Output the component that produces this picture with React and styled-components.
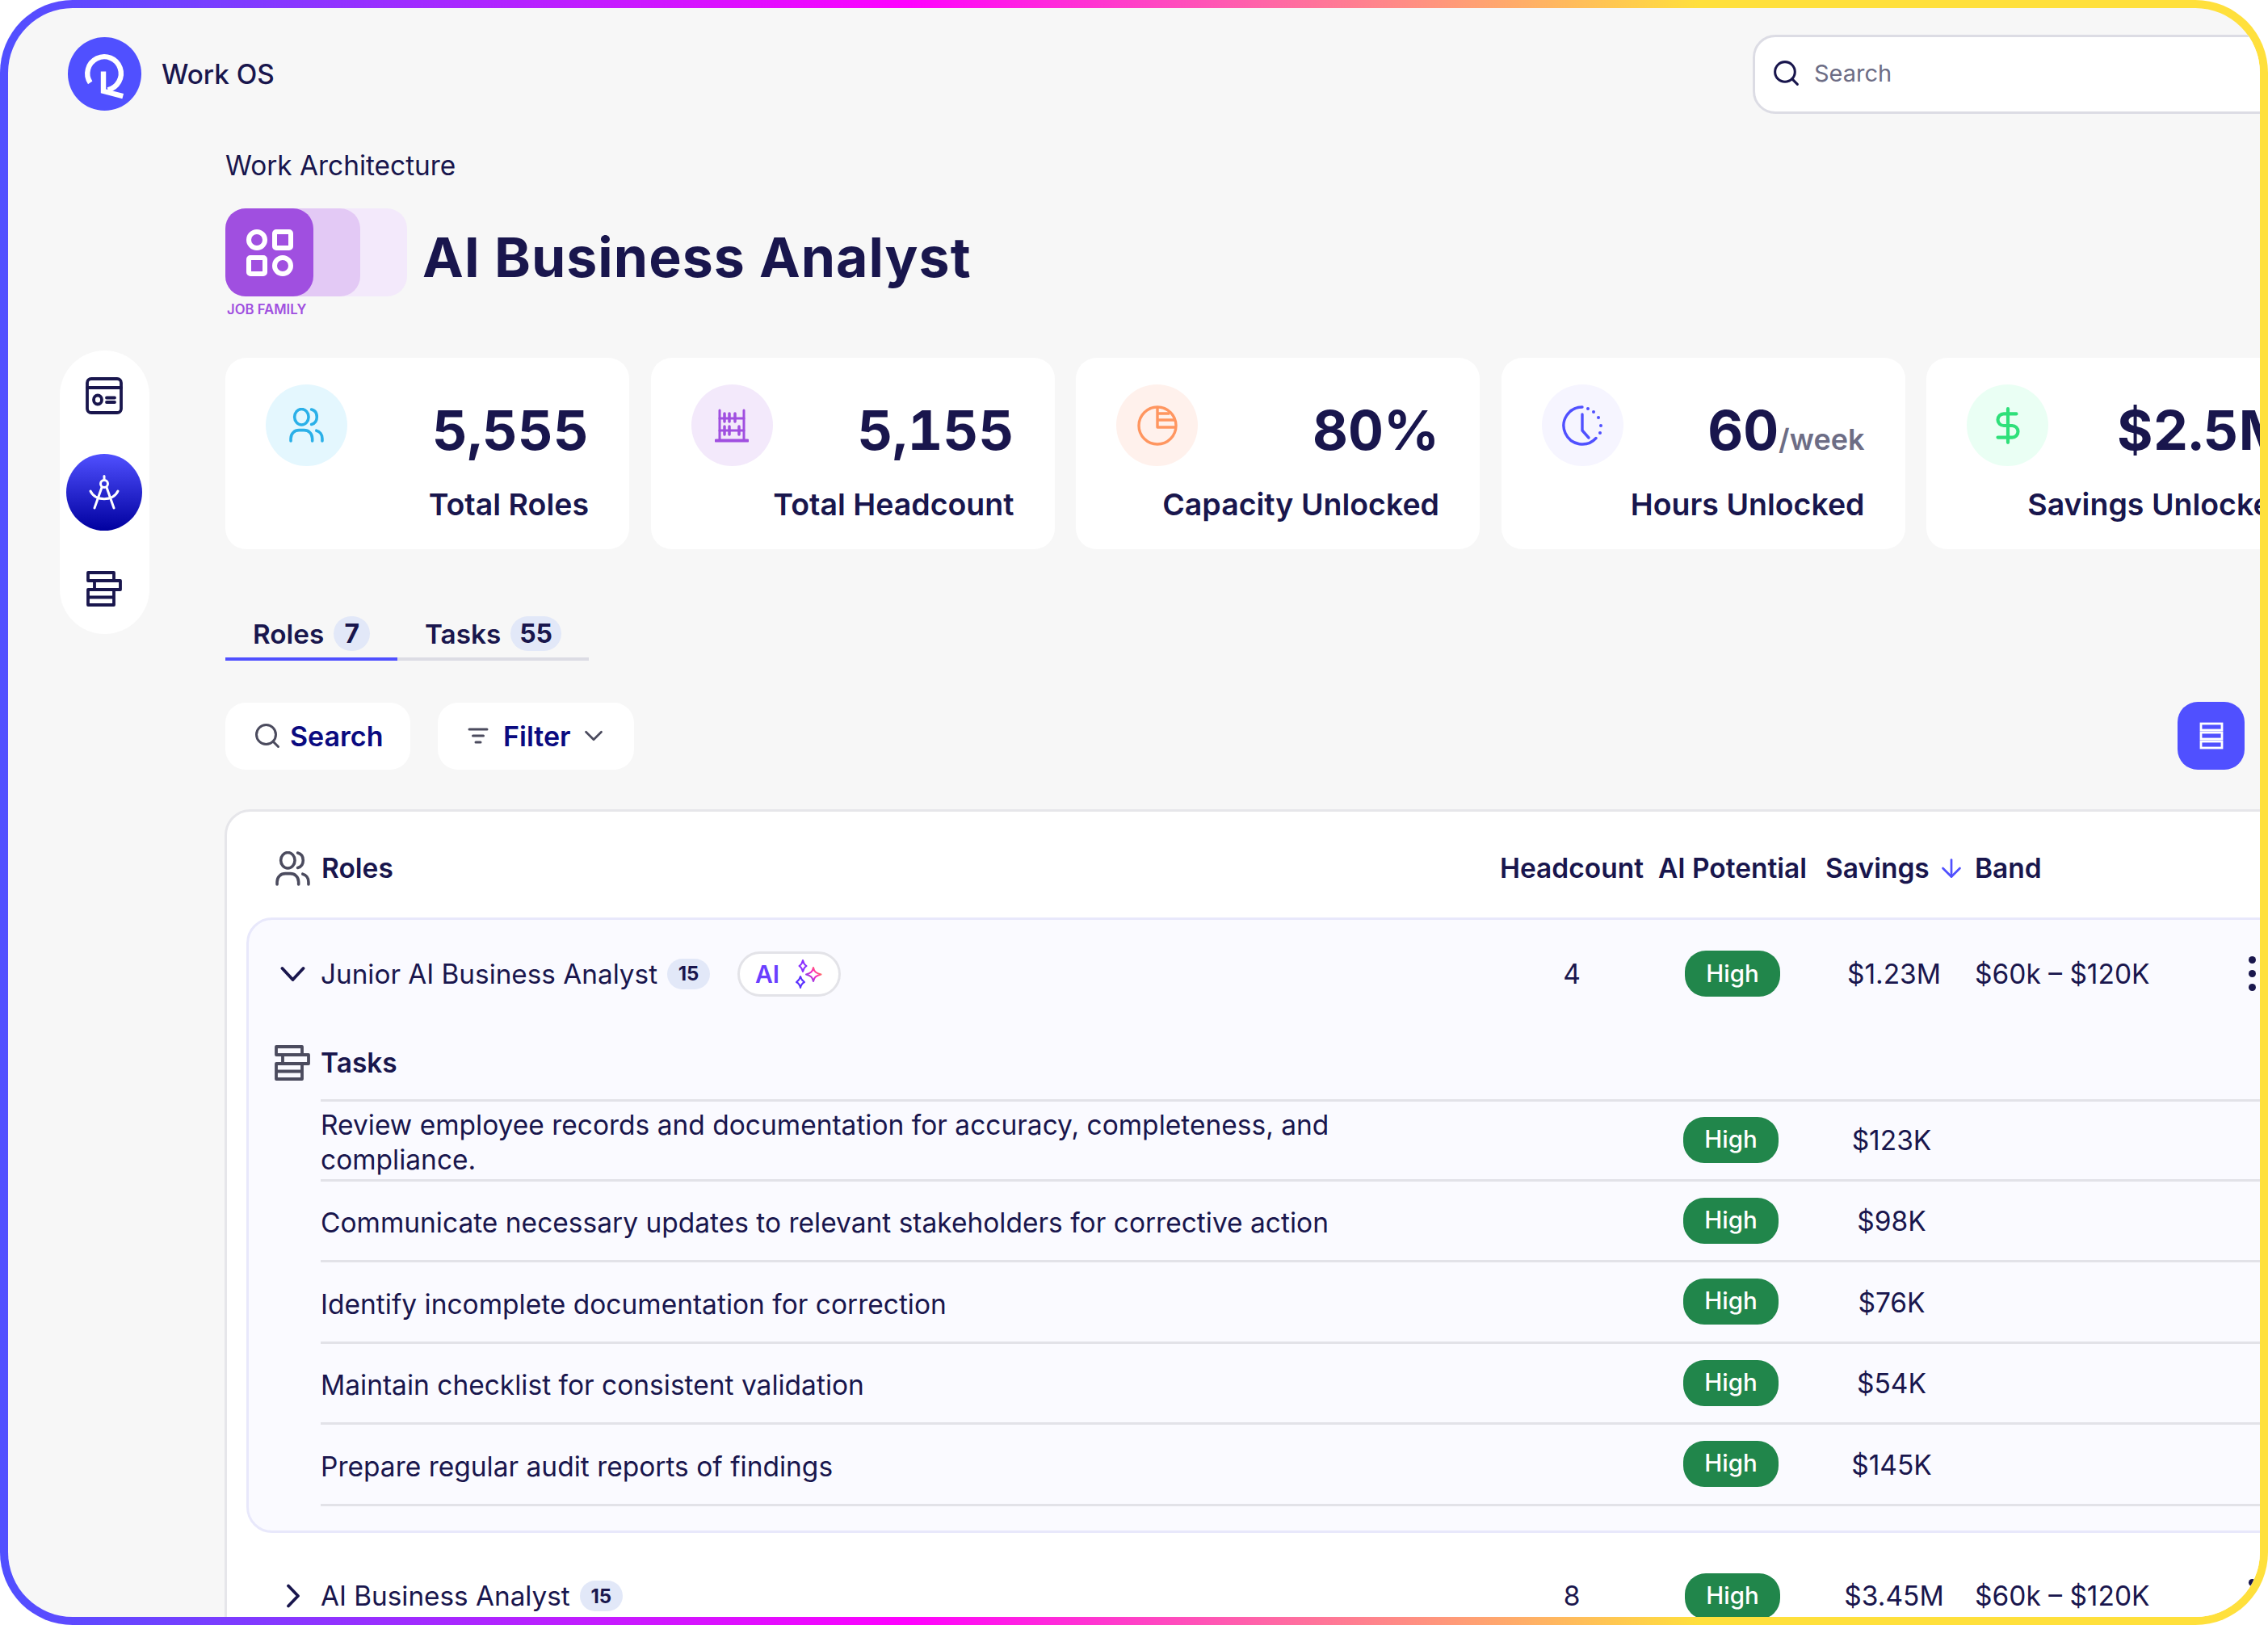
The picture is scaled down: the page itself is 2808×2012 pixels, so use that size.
import React from "react";
import styled, { createGlobalStyle } from "styled-components";
import { Search, ChevronDown, ArrowDown, DollarSign } from "lucide-react";

const INK = "#19164d";

const Global = createGlobalStyle`
  html, body { margin: 0; padding: 0; background: #fff; }
  body { font-family: Inter, "Noto Sans", sans-serif; color: ${INK}; }
  * { box-sizing: border-box; }
`;

const Frame = styled.div`
  width: 2808px;
  height: 2012px;
  border: 10px solid transparent;
  border-radius: 90px;
  background:
    linear-gradient(#f7f7f7, #f7f7f7) padding-box,
    linear-gradient(90deg, #5050ff 0%, #ff00ff 40%, #ffe03c 75%, #ffe03c 100%) border-box;
  overflow: hidden;
`;

const Topbar = styled.header`
  display: flex;
  align-items: flex-start;
  padding: 33px 0 0 74px;
  height: 131px;
`;
const Brand = styled.div`
  flex: 0 0 2086px;
  display: flex;
  align-items: center;
  gap: 25px;
  padding-top: 3px;
  font-size: 33.3px;
  font-weight: 500;
`;
const Logo = styled.svg`
  width: 91px;
  height: 91px;
  display: block;
`;
const TopSearch = styled.div`
  flex: 0 0 800px;
  height: 98px;
  display: flex;
  align-items: center;
  gap: 16px;
  padding: 0 0 4px 20px;
  background: #fff;
  border: 3px solid #dcdce4;
  border-radius: 28px;
  font-size: 29px;
  color: #6d6d85;
`;

const Body = styled.div`
  display: flex;
  align-items: flex-start;
`;
const SideCol = styled.div`
  flex: 0 0 269px;
  padding: 293px 0 0 63.5px;
`;
const Sidebar = styled.nav`
  width: 111px;
  height: 351px;
  border-radius: 56px;
  background: #fff;
  display: flex;
  flex-direction: column;
  align-items: center;
  padding-top: 33px;
`;
const SideIcon = styled.div`
  display: flex;
  align-items: center;
  justify-content: center;
  color: ${INK};
  width: 94px;
  height: ${(p) => p.$h}px;
  margin-bottom: ${(p) => p.$mb || 0}px;
`;
const SideActive = styled.div`
  width: 94px;
  height: 95px;
  border-radius: 50%;
  background: linear-gradient(180deg, #5050ff 0%, #00009f 100%);
  display: flex;
  align-items: center;
  justify-content: center;
  color: #fff;
  margin-bottom: 50px;
`;

const Content = styled.main`
  flex: 0 0 2600px;
`;
const Crumb = styled.div`
  margin-top: 44px;
  font-size: 33.4px;
  line-height: 40px;
`;
const TitleRow = styled.div`
  margin-top: 33px;
  display: flex;
  align-items: center;
  gap: 19px;
`;
const Layer = styled.div`
  width: ${(p) => p.$w}px;
  height: 109px;
  border-radius: 25px;
  background: ${(p) => p.$bg};
  display: flex;
  align-items: center;
  justify-content: ${(p) => (p.$front ? "center" : "flex-start")};
  color: #fff;
`;
const Title = styled.h1`
  margin: 10px 0 0;
  font-size: 68px;
  letter-spacing: 1px;
  line-height: 84px;
  font-weight: 700;
`;
const Family = styled.div`
  margin: 6px 0 0 2px;
  font-size: 16.7px;
  line-height: 20px;
  font-weight: 600;
  color: #a04fe0;
`;

const Cards = styled.section`
  margin-top: 50px;
  display: flex;
  gap: 26.5px;
`;
const Card = styled.article`
  flex: 0 0 500px;
  height: 237px;
  background: #fff;
  border-radius: 26px;
  padding: 33px 50px 0 50px;
  display: flex;
  flex-direction: column;
  white-space: nowrap;
`;
const CardTop = styled.div`
  display: flex;
  justify-content: space-between;
  align-items: flex-start;
`;
const IconDisc = styled.div`
  flex: 0 0 101px;
  height: 101px;
  border-radius: 50%;
  background: ${(p) => p.$bg};
  color: ${(p) => p.$fg};
  display: flex;
  align-items: center;
  justify-content: center;
`;
const Num = styled.div`
  font-size: 68px;
  line-height: 80px;
  font-weight: 700;
  margin-top: 16px;
  font-variant-numeric: tabular-nums;
`;
const Unit = styled.span`
  font-size: 36px;
  line-height: 1;
  font-weight: 600;
  color: #6d6d85;
`;
const CardLabel = styled.div`
  margin-top: 26px;
  text-align: right;
  font-size: 37.5px;
  line-height: 44px;
  font-weight: 600;
`;

const Tabs = styled.div`
  margin-top: 83px;
  width: 450px;
  display: flex;
  border-bottom: 4px solid #dcdce4;
`;
const Tab = styled.div`
  display: flex;
  align-items: center;
  gap: 12px;
  padding: 0 34px 8px;
  margin-bottom: -4px;
  width: ${(p) => p.$w}px;
  font-size: 33.3px;
  font-weight: 600;
  border-bottom: 4px solid ${(p) => (p.$active ? "#5050ff" : "transparent")};
`;
const TabBadge = styled.span`
  height: 43px;
  padding: 0 13px;
  min-width: 45px;
  border-radius: 22px;
  background: #e2e8f8;
  display: flex;
  align-items: center;
  justify-content: center;
  font-size: 32px;
  font-weight: 700;
`;

const Toolbar = styled.div`
  margin-top: 51px;
  width: 2500px;
  display: flex;
  align-items: center;
  gap: 34px;
`;
const ToolBtn = styled.div`
  height: 83px;
  width: ${(p) => p.$w}px;
  background: #fff;
  border-radius: 25px;
  display: flex;
  align-items: center;
  padding-left: ${(p) => p.$pl}px;
  font-size: 34px;
  font-weight: 600;
  color: #0a0a80;
`;
const ToolIcon = styled.span`
  display: flex;
  color: #4b4b5e;
  margin-right: ${(p) => p.$mr}px;
  margin-left: ${(p) => p.$ml || 0}px;
`;
const ViewBtn = styled.div`
  margin-left: auto;
  width: 83px;
  height: 84px;
  border-radius: 25px;
  background: #5050ff;
  display: flex;
  align-items: center;
  justify-content: center;
`;

const Table = styled.section`
  margin: 49px 0 0 -1px;
  width: 2700px;
  background: #fff;
  border: 3px solid #e6e6ea;
  border-radius: 32px;
  padding-bottom: 100px;
`;
const HeadRow = styled.div`
  display: grid;
  grid-template-columns: 1569px 192px 206px 197px 1fr;
  align-items: center;
  height: 131px;
  padding-top: 9px;
  font-size: 33.5px;
  font-weight: 600;
`;
const HeadFirst = styled.div`
  display: flex;
  align-items: center;
  gap: 14px;
  padding-left: 60px;
`;
const HeadCell = styled.div`
  text-align: center;
  white-space: nowrap;
`;
const SortCell = styled.div`
  display: flex;
  align-items: center;
  gap: 9px;
  padding-left: 12px;
  color: ${INK};
  white-space: nowrap;
`;
const Arrow = styled.span`
  display: flex;
  color: #5050ff;
`;
const HeadLeft = styled.div`
  white-space: nowrap;
`;

const Panel = styled.div`
  margin-left: 24px;
  background: #fafaff;
  border: 3px solid #e8e8fb;
  border-radius: 32px;
  padding: 38px 0 30px;
`;
const RoleRow = styled.div`
  display: grid;
  grid-template-columns: 1542px 192px 206px 197px 325px 36px;
  align-items: center;
  font-size: 33.5px;
  margin-left: ${(p) => p.$ml || 0}px;
  margin-top: ${(p) => p.$mt || 0}px;
`;
const NameCell = styled.div`
  display: flex;
  align-items: center;
  padding-left: 39px;
  font-size: 33.3px;
  white-space: nowrap;
`;
const Chevron = styled.span`
  flex: 0 0 31px;
  margin-right: 19px;
  display: flex;
  justify-content: center;
  color: ${INK};
`;
const CountBadge = styled.span`
  margin-left: 12px;
  width: 53px;
  height: 38px;
  border-radius: 19px;
  background: #e2e8f8;
  font-size: 24px;
  font-weight: 700;
  display: flex;
  align-items: center;
  justify-content: center;
`;
const AiPill = styled.span`
  margin-left: 34px;
  width: 128px;
  height: 56px;
  border-radius: 28px;
  border: 3px solid #e3e3e8;
  background: #fff;
  display: flex;
  align-items: center;
  justify-content: center;
  gap: 18px;
  font-size: 30px;
  font-weight: 600;
  color: #6a3fff;
`;
const Center = styled.div`
  text-align: center;
  white-space: nowrap;
  padding-right: ${(p) => p.$pr || 0}px;
`;
const PillCell = styled.div`
  display: flex;
  justify-content: center;
  padding-bottom: ${(p) => p.$pb || 0}px;
`;
const High = styled.span`
  width: 118px;
  height: 57px;
  padding-bottom: 2px;
  border-radius: 26px;
  background: #21864b;
  color: #fff;
  font-size: 29.5px;
  font-weight: 500;
  display: flex;
  align-items: center;
  justify-content: center;
`;
const Band = styled.div`
  white-space: nowrap;
`;
const Kebab = styled.div`
  display: flex;
  flex-direction: column;
  align-items: center;
  gap: 8px;
`;
const Dot = styled.span`
  width: 9px;
  height: 9px;
  border-radius: 50%;
  background: ${INK};
`;

const TasksHead = styled.div`
  margin-top: 60px;
  padding-left: 32px;
  display: flex;
  align-items: center;
  gap: 13px;
  font-size: 33.5px;
  font-weight: 600;
  color: ${INK};
`;
const TaskList = styled.div`
  margin: 23px 0 0 89px;
  border-top: 3px solid #e2e2e8;
`;
const TaskRow = styled.div`
  display: grid;
  grid-template-columns: 1451px 192px 206px 192px 1fr;
  align-items: center;
  height: 100.5px;
  padding-top: 3px;
  border-bottom: 3px solid #e2e2e8;
  font-size: 33.5px;
  line-height: 43px;

  &:first-child {
    height: 98.5px;
    padding-top: 2px;
  }
`;
const TaskText = styled.div`
  width: 1300px;
  padding-top: 4px;
`;
const Spacer = styled.div``;

const Ic = styled.svg`
  display: block;
  flex: none;
`;

const UsersIcon = ({ size = 43, color = "currentColor", sw = 3.5 }) => (
  <Ic width={size} height={size} viewBox="0 0 42 42" fill="none" stroke={color} strokeWidth={sw} strokeLinecap="round">
    <ellipse cx="15" cy="11" rx="8.5" ry="9.5" />
    <path d="M27 2c4 1 6.500 4.500 6.500 9s-2.500 8-6.500 9" />
    <path d="M2 40v-3c0-6 4.500-10 10-10h6c5.500 0 10 4 10 10v3" />
    <path d="M33 27.500c4 1 7 4.500 7 9.500v3" />
  </Ic>
);
const StackIcon = ({ size = 44, color = "currentColor", sw = 3.8 }) => (
  <Ic width={size} height={size} viewBox="0 0 44 44" fill="none" stroke={color} strokeWidth={sw} strokeLinejoin="round">
    <rect x="2" y="2" width="32" height="10" />
    <rect x="10" y="12" width="32" height="11" />
    <path d="M2 23h32v19H2zM2 32.500h32" />
  </Ic>
);
const IdIcon = () => (
  <Ic width="46" height="46" viewBox="0 0 46 46" fill="none" stroke="currentColor" strokeWidth="3.8" strokeLinecap="round">
    <rect x="2" y="2" width="42" height="42" rx="5" />
    <path d="M2 13h42" />
    <ellipse cx="15" cy="28" rx="5" ry="5.500" />
    <path d="M26 25.500h10M26 31h10" />
  </Ic>
);
const CompassIcon = () => (
  <Ic width="38" height="43" viewBox="0 0 38 43" fill="none" stroke="currentColor" strokeWidth="3" strokeLinecap="round">
    <path d="M19 1.500v5" />
    <circle cx="19" cy="11" r="4.500" />
    <path d="M16 15.500 7 41M22 15.500 31 41" />
    <path d="M2 20c6 13 28 13 34 0" />
  </Ic>
);
const AppsIcon = () => (
  <Ic width="58" height="58" viewBox="0 0 58 58" fill="none" stroke="#fff" strokeWidth="6">
    <circle cx="13" cy="13" r="10" />
    <rect x="35" y="3" width="20" height="20" rx="2" />
    <rect x="3" y="35" width="20" height="20" rx="2" />
    <circle cx="45" cy="45" r="10" />
  </Ic>
);
const AbacusIcon = () => (
  <Ic width="42" height="42" viewBox="0 0 42 42" fill="none" stroke="currentColor" strokeLinecap="round">
    <path d="M6 2v36M36 2v36" strokeWidth="3" />
    <path d="M1.500 39.500h39" strokeWidth="4" />
    <path d="M6 12h30M6 27h30" strokeWidth="3" />
    <path d="M12 6v10M18 6v10M25 6v10M12 22v10M18 22v10M30 22v10" strokeWidth="3.500" />
  </Ic>
);
const PieIcon = () => (
  <Ic width="50" height="50" viewBox="0 0 50 50" fill="none" stroke="currentColor" strokeWidth="3.4" strokeLinejoin="round">
    <circle cx="25" cy="25" r="23" />
    <path d="M25 2v25h23M25 10h15M25 18h21" />
  </Ic>
);
const ClockIcon = () => (
  <Ic width="50" height="50" viewBox="0 0 50 50" fill="none" stroke="currentColor" strokeWidth="3.4" strokeLinecap="round">
    <path d="M25 2a23 23 0 1 0 17 38.500" />
    <path d="M25 11v20l8 9" />
    <g fill="currentColor" stroke="none">
      <circle cx="32" cy="4" r="2" />
      <circle cx="39" cy="8" r="2" />
      <circle cx="45" cy="15" r="2" />
      <circle cx="48" cy="25" r="2" />
      <circle cx="47" cy="34" r="2" />
    </g>
  </Ic>
);
const FilterIcon = () => (
  <Ic width="26" height="22" viewBox="0 0 26 22" fill="none" stroke="currentColor" strokeWidth="3" strokeLinecap="round">
    <path d="M2 3h22M6.500 11h13M10 19h6" />
  </Ic>
);
const ListIcon = () => (
  <Ic width="30" height="34" viewBox="0 0 30 34" fill="none" stroke="#fff" strokeWidth="2.8">
    <rect x="2" y="2" width="26" height="8" />
    <rect x="2" y="13" width="26" height="8" />
    <rect x="2" y="24" width="26" height="8" />
  </Ic>
);
const CaretDown = () => (
  <Ic width="31" height="20" viewBox="0 0 31 20" fill="none" stroke="currentColor" strokeWidth="3.8" strokeLinecap="round" strokeLinejoin="round">
    <path d="M2.500 3 15.500 17 28.500 3" />
  </Ic>
);
const CaretRight = () => (
  <Ic width="18" height="30" viewBox="0 0 18 30" fill="none" stroke="currentColor" strokeWidth="3.8" strokeLinecap="round" strokeLinejoin="round">
    <path d="M3 2.500 15 15 3 27.500" />
  </Ic>
);
const SparkIcon = () => (
  <Ic width="36" height="36" viewBox="0 0 36 36" fill="none" strokeWidth="2" strokeLinejoin="round">
    <defs>
      <linearGradient id="sp" x1="0" y1="1" x2="1" y2="0.200">
        <stop offset="0" stopColor="#5050ff" />
        <stop offset="0.600" stopColor="#ff20c0" />
        <stop offset="1" stopColor="#ff9040" />
      </linearGradient>
    </defs>
    <path d="M11 1c.8 4 2 5.500 4.500 7C13 9.500 11.800 11 11 15c-.8-4-2-5.500-4.500-7C9 6.500 10.200 5 11 1z" stroke="#8a30ff" />
    <path d="M24 10c1 5 3 7 9.500 8.500C27 20 25 22 24 27c-1-5-3-7-9-8.500C21 17 23 15 24 10z" stroke="url(#sp)" />
    <path d="M8 21c.8 3.500 2 5 5 7-3 1.500-4.200 3-5 7-.8-4-2-5.500-5-7 3-2 4.200-3.500 5-7z" stroke="#5a30ff" />
  </Ic>
);

const stats = [
  { bg: "#e4f7fe", fg: "#2bb0e8", icon: <UsersIcon size={43} />, num: "5,555", label: "Total Roles" },
  { bg: "#f3e9fb", fg: "#a04fe0", icon: <AbacusIcon />, num: "5,155", label: "Total Headcount" },
  { bg: "#fff1ec", fg: "#ff9660", icon: <PieIcon />, num: "80%", label: "Capacity Unlocked" },
  { bg: "#f6f5ff", fg: "#5050ff", icon: <ClockIcon />, num: "60", unit: "/week", label: "Hours Unlocked" },
  { bg: "#eafff4", fg: "#2fe07a", icon: <DollarSign size={50} strokeWidth={2} />, num: "$2.5M", label: "Savings Unlocked" },
];

const tasks = [
  ["Review employee records and documentation for accuracy, completeness, and compliance.", "$123K"],
  ["Communicate necessary updates to relevant stakeholders for corrective action", "$98K"],
  ["Identify incomplete documentation for correction", "$76K"],
  ["Maintain checklist for consistent validation", "$54K"],
  ["Prepare regular audit reports of findings", "$145K"],
];

const KebabMenu = () => (
  <Kebab>
    <Dot />
    <Dot />
    <Dot />
  </Kebab>
);

export default function App() {
  return (
    <>
      <Global />
      <Frame>
        <Topbar>
          <Brand>
            <Logo viewBox="0 0 92 92">
              <circle cx="46" cy="46" r="46" fill="#5050ff" />
              <path d="M28 57A21 21 0 1 1 50 66" fill="none" stroke="#fff" strokeWidth="6.500" />
              <path d="M44.500 43v24.500L69 74" fill="none" stroke="#fff" strokeWidth="6.500" />
            </Logo>
            Work OS
          </Brand>
          <TopSearch>
            <Search size={37} color={INK} strokeWidth={2} />
            Search
          </TopSearch>
        </Topbar>
        <Body>
          <SideCol>
            <Sidebar>
              <SideIcon $h={46} $mb={49}>
                <IdIcon />
              </SideIcon>
              <SideActive>
                <CompassIcon />
              </SideActive>
              <SideIcon $h={44}>
                <StackIcon />
              </SideIcon>
            </Sidebar>
          </SideCol>
          <Content>
            <Crumb>Work Architecture</Crumb>
            <TitleRow>
              <Layer $w={225} $bg="#f3e9fb">
                <Layer $w={167} $bg="#e3c9f5">
                  <Layer $w={109} $bg="#a04fe0" $front>
                    <AppsIcon />
                  </Layer>
                </Layer>
              </Layer>
              <Title>AI Business Analyst</Title>
            </TitleRow>
            <Family>JOB FAMILY</Family>
            <Cards>
              {stats.map((s) => (
                <Card key={s.label}>
                  <CardTop>
                    <IconDisc $bg={s.bg} $fg={s.fg}>
                      {s.icon}
                    </IconDisc>
                    <Num>
                      {s.num}
                      {s.unit && <Unit>{s.unit}</Unit>}
                    </Num>
                  </CardTop>
                  <CardLabel>{s.label}</CardLabel>
                </Card>
              ))}
            </Cards>
            <Tabs>
              <Tab $active $w={213}>
                Roles <TabBadge>7</TabBadge>
              </Tab>
              <Tab $w={237}>
                Tasks <TabBadge>55</TabBadge>
              </Tab>
            </Tabs>
            <Toolbar>
              <ToolBtn $w={229} $pl={34}>
                <ToolIcon $mr={10}>
                  <Search size={36} strokeWidth={2} />
                </ToolIcon>
                Search
              </ToolBtn>
              <ToolBtn $w={243} $pl={37}>
                <ToolIcon $mr={18}>
                  <FilterIcon />
                </ToolIcon>
                Filter
                <ToolIcon $mr={0} $ml={9}>
                  <ChevronDown size={38} strokeWidth={1.7} />
                </ToolIcon>
              </ToolBtn>
              <ViewBtn>
                <ListIcon />
              </ViewBtn>
            </Toolbar>
            <Table>
              <HeadRow>
                <HeadFirst>
                  <UsersIcon size={43} color="#4b4b5e" />
                  Roles
                </HeadFirst>
                <HeadCell>Headcount</HeadCell>
                <HeadCell>AI Potential</HeadCell>
                <SortCell>
                  Savings
                  <Arrow>
                    <ArrowDown size={36} strokeWidth={1.8} />
                  </Arrow>
                </SortCell>
                <HeadLeft>Band</HeadLeft>
              </HeadRow>
              <Panel>
                <RoleRow>
                  <NameCell>
                    <Chevron>
                      <CaretDown />
                    </Chevron>
                    Junior AI Business Analyst
                    <CountBadge>15</CountBadge>
                    <AiPill>
                      AI
                      <SparkIcon />
                    </AiPill>
                  </NameCell>
                  <Center>4</Center>
                  <PillCell>
                    <High>High</High>
                  </PillCell>
                  <Center $pr={3}>$1.23M</Center>
                  <Band>$60k – $120K</Band>
                  <KebabMenu />
                </RoleRow>
                <TasksHead>
                  <StackIcon color="#4b4b5e" />
                  Tasks
                </TasksHead>
                <TaskList>
                  {tasks.map(([text, value]) => (
                    <TaskRow key={text}>
                      <TaskText>{text}</TaskText>
                      <Spacer />
                      <PillCell $pb={3}>
                        <High>High</High>
                      </PillCell>
                      <Center>{value}</Center>
                    </TaskRow>
                  ))}
                </TaskList>
              </Panel>
              <RoleRow $ml={27} $mt={50}>
                <NameCell>
                  <Chevron>
                    <CaretRight />
                  </Chevron>
                  AI Business Analyst
                  <CountBadge>15</CountBadge>
                </NameCell>
                <Center>8</Center>
                <PillCell>
                  <High>High</High>
                </PillCell>
                <Center $pr={3}>$3.45M</Center>
                <Band>$60k – $120K</Band>
                <KebabMenu />
              </RoleRow>
            </Table>
          </Content>
        </Body>
      </Frame>
    </>
  );
}
